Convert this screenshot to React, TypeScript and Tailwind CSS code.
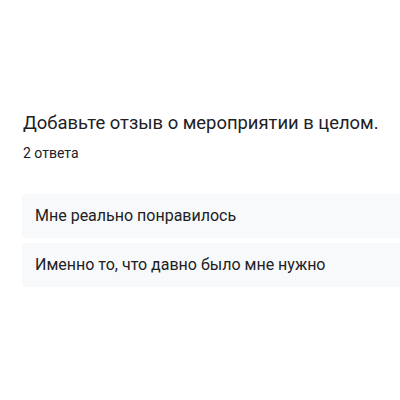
export default function App() {
  const answers = ["Мне реально понравилось", "Именно то, что давно было мне нужно"];
  return (
    <div className="w-[400px] h-[400px] bg-white overflow-hidden" style={{ fontFamily: "Roboto, sans-serif" }}>
      <div className="pt-[111px] pl-[23px]">
        <h2 className="text-[18.4px] leading-[24px] text-[#202124] font-normal">
          Добавьте отзыв о мероприятии в целом.
        </h2>
        <p className="mt-[9px] text-[14px] leading-[18px] text-[#202124]">2 ответа</p>
        <div className="mt-[32px] flex flex-col gap-[5px] -ml-px">
          {answers.map((a) => (
            <div key={a} className="h-[44px] flex items-center pl-[13px] bg-[#f8f9fa] rounded-l-[4px] text-[16px] text-[#202124]">
              {a}
            </div>
          ))}
        </div>
      </div>
    </div>
  );
}
